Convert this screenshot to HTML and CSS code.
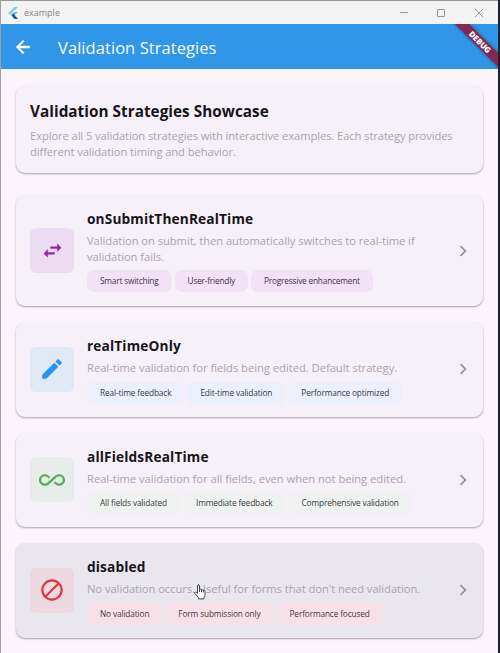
FILE: index.html
```html
<!DOCTYPE html>
<html lang="en">
<head>
<meta charset="utf-8">
<title>example</title>
<link rel="stylesheet" href="styles.css">
</head>
<body>
<div class="window">
  <header class="titlebar">
    <svg class="logo" width="12" height="14" viewBox="0 0 12 14"><path d="M7.5 1H11L3 9 1 7z" fill="#7fd0ee"/><path d="M7.5 6H11L6.5 10.2 4.3 8.5z" fill="#62bce8"/><path d="M4.3 9.2 6.5 7.5 11 13H7.5z" fill="#245b91"/></svg>
    <span class="app-name">example</span>
    <svg class="controls" width="86" height="10" viewBox="0 0 86 10" fill="none" stroke="#999"><path d="M1 4.5h8M38.5 1.5h7v7h-7zM76 1l8 8M84 1l-8 8"/></svg>
  </header>
  <div class="appbar">
    <svg class="back" width="20" height="20" viewBox="0 0 24 24"><path d="M20 10.8H7.8l5.6-5.6L12 3.8 3.8 12l8.2 8.2 1.4-1.4-5.6-5.6H20z" fill="#fff" stroke="#fff" stroke-width=".6"/></svg>
    <span class="heading">Validation Strategies</span>
    <div class="debug-corner"><span class="debug">DEBUG</span></div>
  </div>
  <main>
    <section class="card intro">
      <h1>Validation Strategies Showcase</h1>
      <p>Explore all 5 validation strategies with interactive examples. Each strategy provides<br>different validation timing and behavior.</p>
    </section>
    <section class="card purple">
      <div class="tile"><svg width="23" height="23" viewBox="0 0 24 24"><path d="M6.99 11 3 15l3.99 4v-3H14v-2H6.99zM21 9l-3.99-4v3H10v2h7.01v3z" fill="#8e24aa" stroke="#8e24aa" stroke-width=".4"/></svg></div>
      <div class="body">
        <h2>onSubmitThenRealTime</h2>
        <p>Validation on submit, then automatically switches to real-time if<br>validation fails.</p>
        <div class="chips"><span>Smart switching</span><span>User-friendly</span><span>Progressive enhancement</span></div>
      </div>
      <svg class="chevron" width="22" height="22" viewBox="0 0 24 24"><path d="M10 6 8.6 7.4l4.6 4.6-4.6 4.6L10 18l6-6z"/></svg>
    </section>
    <section class="card blue">
      <div class="tile"><svg width="26" height="26" viewBox="0 0 24 24"><path d="M3 17.25V21h3.75L17.81 9.94l-3.75-3.75zM20.71 7.04a1 1 0 0 0 0-1.41l-2.34-2.34a1 1 0 0 0-1.41 0l-1.83 1.83 3.75 3.75z" fill="#2196f3"/></svg></div>
      <div class="body">
        <h2>realTimeOnly</h2>
        <p>Real-time validation for fields being edited. Default strategy.</p>
        <div class="chips"><span>Real-time feedback</span><span>Edit-time validation</span><span>Performance optimized</span></div>
      </div>
      <svg class="chevron" width="22" height="22" viewBox="0 0 24 24"><path d="M10 6 8.6 7.4l4.6 4.6-4.6 4.6L10 18l6-6z"/></svg>
    </section>
    <section class="card green">
      <div class="tile"><svg width="26" height="26" viewBox="0 0 24 24"><path d="M18.6 6.62c-1.44 0-2.8.56-3.77 1.53L12 10.66 10.48 12h.01L7.8 14.39c-.64.64-1.49.99-2.4.99-1.87 0-3.39-1.51-3.39-3.38S3.53 8.62 5.4 8.62c.91 0 1.76.35 2.44 1.03l1.13 1 1.51-1.34L9.22 8.2C8.2 7.18 6.84 6.62 5.4 6.62 2.42 6.62 0 9.04 0 12s2.42 5.38 5.4 5.38c1.44 0 2.8-.56 3.77-1.53l2.83-2.5.01.01L13.52 12h-.01l2.69-2.39c.64-.64 1.49-.99 2.4-.99 1.87 0 3.39 1.51 3.39 3.38s-1.52 3.38-3.39 3.38c-.9 0-1.76-.35-2.44-1.03l-1.14-1.01-1.51 1.34 1.27 1.12a5.386 5.386 0 0 0 3.82 1.57c2.98 0 5.4-2.41 5.4-5.38s-2.42-5.37-5.4-5.37z" fill="#4caf50"/></svg></div>
      <div class="body">
        <h2>allFieldsRealTime</h2>
        <p>Real-time validation for all fields, even when not being edited.</p>
        <div class="chips"><span>All fields validated</span><span>Immediate feedback</span><span>Comprehensive validation</span></div>
      </div>
      <svg class="chevron" width="22" height="22" viewBox="0 0 24 24"><path d="M10 6 8.6 7.4l4.6 4.6-4.6 4.6L10 18l6-6z"/></svg>
    </section>
    <section class="card red">
      <div class="tile"><svg width="26" height="26" viewBox="0 0 24 24" fill="none" stroke="#d83a40" stroke-width="2"><circle cx="12" cy="12" r="8.9"/><path d="M5.7 18.3 18.3 5.7"/></svg></div>
      <div class="body">
        <h2>disabled</h2>
        <p>No validation occurs. Useful for forms that don't need validation.</p>
        <div class="chips"><span>No validation</span><span>Form submission only</span><span>Performance focused</span></div>
      </div>
      <svg class="chevron" width="22" height="22" viewBox="0 0 24 24"><path d="M10 6 8.6 7.4l4.6 4.6-4.6 4.6L10 18l6-6z"/></svg>
    </section>
  </main>
  <svg class="pointer" width="12" height="16" viewBox="0 0 12 16"><path d="M3.5 9V2q0-1.3 1-1.3t1 1.3v3.4q1.6-.8 2 .3 1.4-.5 1.7.5 1.8-.4 1.8 1.2v3.1q0 2-1 3.2v1.2H4.6v-1.2L1 9.7q-.8-1.2.2-1.6.9-.3 2.3 1.5M5.5 5.3V8m2-2.3v2.5m1.8-2v2.3" fill="#fff" stroke="#33333b" stroke-width=".9"/></svg>
</div>
</body>
</html>
```

FILE: styles.css
```css
* { box-sizing: border-box; }
body {
  margin: 0;
  width: 500px;
  height: 653px;
  overflow: hidden;
  background: #20202a;
  font-family: "Open Sans", "Noto Sans", sans-serif;
}
.window {
  position: relative;
  width: 498px;
  height: 653px;
  overflow: hidden;
  background: #fcf4fd;
  border-left: 1px solid #a39da5;
  border-top: 1px solid #9b969b;
}
.titlebar {
  display: flex;
  align-items: center;
  height: 23px;
  padding: 0 13px 0 6px;
  background: #f3f3f3;
}
.app-name { margin-left: 5px; font-size: 9px; color: #858585; }
.controls { margin-left: auto; }
.appbar {
  position: relative;
  display: flex;
  align-items: center;
  height: 45px;
  padding-left: 12px;
  background: #3096e8;
  color: #f4faff;
}
.heading { margin-left: 25px; font-size: 16.5px; letter-spacing: .06px; line-height: 22px; padding-top: 2px; white-space: nowrap; }
.debug-corner { position: absolute; top: 0; right: 0; width: 50px; height: 45px; overflow: hidden; }
.debug {
  position: absolute;
  left: -14px;
  top: 13px;
  width: 92px;
  height: 10px;
  background: #852850;
  color: #fff;
  font-size: 8px;
  font-weight: 800;
  line-height: 10px;
  text-align: center;
  letter-spacing: -.1px;
  transform: rotate(45deg);
  box-shadow: 0 0 4px #0006;
}
main { display: flex; flex-direction: column; gap: 16px; padding: 17px 15px 0; }
.card {
  display: flex;
  align-items: center;
  height: 94.5px;
  padding: 0 9px 0 14px;
  border-radius: 9px;
  background: #f6f1f8;
  box-shadow: 0 1px 2px #00000040, 0 1px 2px #0000001c;
}
.intro { display: block; height: 87px; padding: 14px; margin-bottom: 6px; }
.purple { height: 111px; }
.red { background: #e9e7ed; }
h1, h2, p { margin: 0; white-space: nowrap; color: #17151a; }
h1 { font-size: 15.3px; line-height: 22px; letter-spacing: .03px; }
h2 { font-size: 13.7px; line-height: 20px; letter-spacing: .14px; }
p { color: #aaa5ad; font-size: 11.2px; line-height: 16px; letter-spacing: -.05px; }
.intro p { margin-top: 6px; letter-spacing: -.09px; }
.body { flex: 1; margin-left: 13px; padding-top: 1.5px; }
.purple .body { padding-top: 0; }
.body p { margin-top: 4px; }
.blue p, .green p { letter-spacing: -.02px; }
.tile { display: flex; align-items: center; justify-content: center; width: 44px; height: 45px; border-radius: 6px; }
.chips { display: flex; gap: 3px; margin-top: 5.5px; }
.purple .chips { margin-top: 5px; }
.chips span { height: 22px; padding: 0 13px; border-radius: 7px; font-size: 8.3px; line-height: 22px; white-space: nowrap; color: #3f3546; font-weight: 500; letter-spacing: -.14px; }
.purple .chips span { background: #f1e2f5; letter-spacing: -.2px; }
.purple .tile { background: #ecdcf2; }
.blue .tile { background: #e1e9f7; }
.blue .chips span { background: #ecf0fc; color: #34394c; }
.green .tile { background: #e8edeb; }
.green .chips span { background: #eff2f1; color: #35413a; }
.red .tile { background: #ecd8df; }
.red .chips span { background: #f8e0e9; color: #493640; }
.chevron { fill: #98949b; }
.pointer { position: absolute; left: 193px; top: 583px; }
```
